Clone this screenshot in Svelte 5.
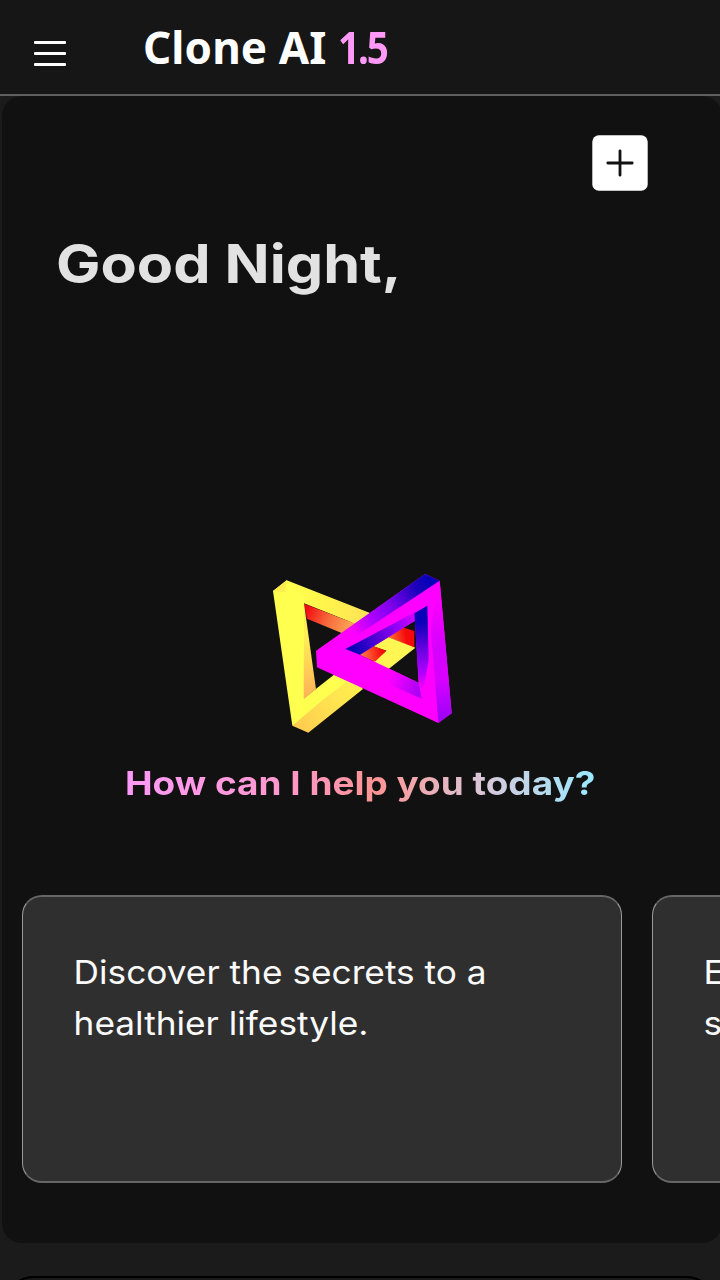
<script>
  const prompts = [
    ['Discover the secrets to a', 'healthier lifestyle.'],
    ['Explore the world of', 'space and science.']
  ];
</script>

<div class="app">
  <header>
    <button class="menu" aria-label="Menu"><i></i><i></i><i></i></button>
    <h1>Clone AI <b>1.5</b></h1>
  </header>

  <main>
    <div class="tools">
      <button class="add" aria-label="New chat">
        <svg viewBox="0 0 56 56" width="56" height="56">
          <rect x=".3" y=".3" width="55.4" height="55.4" rx="6.5" fill="#fff" />
          <path d="M28 15.8V40.2M15.8 28H40.2" stroke="#111" stroke-width="2.8" stroke-linecap="round" />
        </svg>
      </button>
    </div>

    <h2><span class="fit">Good Night,</span></h2>

    <div class="hero">
      <svg class="logo" viewBox="0 0 630 555" width="210" height="185">
        <defs>
          <linearGradient id="bar" gradientUnits="userSpaceOnUse" x1="80" y1="90" x2="330" y2="190">
            <stop offset="0" stop-color="#ffff50" /><stop offset=".5" stop-color="#fff34b" /><stop offset="1" stop-color="#ffe05a" />
          </linearGradient>
          <linearGradient id="ember" gradientUnits="userSpaceOnUse" x1="140" y1="150" x2="275" y2="205">
            <stop offset="0" stop-color="#f50d12" /><stop offset=".45" stop-color="#f6653a" /><stop offset="1" stop-color="#ffa757" />
          </linearGradient>
          <linearGradient id="glow" gradientUnits="userSpaceOnUse" x1="385" y1="225" x2="435" y2="215">
            <stop offset="0" stop-color="#ff7038" /><stop offset="1" stop-color="#f50a0c" />
          </linearGradient>
          <linearGradient id="inner" gradientUnits="userSpaceOnUse" x1="135" y1="230" x2="150" y2="410">
            <stop offset="0" stop-color="#ffee55" /><stop offset="1" stop-color="#ffb258" />
          </linearGradient>
          <linearGradient id="foot" gradientUnits="userSpaceOnUse" x1="120" y1="510" x2="300" y2="375">
            <stop offset="0" stop-color="#ffcc50" /><stop offset=".5" stop-color="#ffe050" /><stop offset="1" stop-color="#fff04d" />
          </linearGradient>
          <linearGradient id="spark" gradientUnits="userSpaceOnUse" x1="310" y1="286" x2="368" y2="275">
            <stop offset="0" stop-color="#ff7040" /><stop offset="1" stop-color="#f50808" />
          </linearGradient>
          <linearGradient id="top" gradientUnits="userSpaceOnUse" x1="505" y1="60" x2="275" y2="215">
            <stop offset="0" stop-color="#0800b8" /><stop offset=".16" stop-color="#1c00bc" /><stop offset=".5" stop-color="#8000ee" /><stop offset=".75" stop-color="#b000ff" /><stop offset="1" stop-color="#f0f" />
          </linearGradient>
          <linearGradient id="mid" gradientUnits="userSpaceOnUse" x1="280" y1="270" x2="470" y2="165">
            <stop offset="0" stop-color="#0900b8" /><stop offset=".4" stop-color="#5b00d8" /><stop offset=".75" stop-color="#a000ff" /><stop offset="1" stop-color="#e000ff" />
          </linearGradient>
          <linearGradient id="side" gradientUnits="userSpaceOnUse" x1="480" y1="185" x2="485" y2="390">
            <stop offset="0" stop-color="#0900b8" /><stop offset=".45" stop-color="#7200e5" /><stop offset=".75" stop-color="#b000ff" /><stop offset="1" stop-color="#f0f" />
          </linearGradient>
          <linearGradient id="edge" gradientUnits="userSpaceOnUse" x1="540" y1="100" x2="555" y2="470">
            <stop offset="0" stop-color="#f0f" /><stop offset=".45" stop-color="#d500ff" /><stop offset=".7" stop-color="#d800ff" /><stop offset="1" stop-color="#a000f8" />
          </linearGradient>
          <linearGradient id="low" gradientUnits="userSpaceOnUse" x1="390" y1="350" x2="480" y2="385">
            <stop offset="0" stop-color="#f0f" /><stop offset="1" stop-color="#aa00f5" />
          </linearGradient>
        </defs>
        <path d="M80 61L330 159L330 212L265 183L132 130L66 92Z" fill="url(#bar)" />
        <path d="M132 131L275 187L330 210L320 250L141 176Z" fill="url(#ember)" />
        <path d="M415 198L463 213V264L370 226Z" fill="url(#glow)" />
        <path d="M370 226L466 263L385 328L335 309L379 272L336 257Z" fill="#fff653" />
        <path d="M336 257L379 272L345 305L298 284Z" fill="url(#spark)" />
        <path d="M39 93L80 61L132 112L132 415L222 344L312 380L97 497Z" fill="#ffff50" />
        <path d="M132 130L168 388L131 417Z" fill="url(#inner)" />
        <path d="M39 93L80 61L75 96Z" fill="#ffed4e" />
        <path d="M97 497L188 420L260 365L310 386L145 518Z" fill="url(#foot)" />
        <path d="M168 273L495 42L539 62L575 460L535 489L171 322ZM300 284L476 368L465 182Z" fill="#f0f" fill-rule="evenodd" />
        <path d="M495 42L539 62L285 230L168 273Z" fill="url(#top)" />
        <path d="M256 267L502 137L463 162L465 182L300 284Z" fill="url(#mid)" />
        <path d="M463 160L502 137L506 300L485 416L476 368Z" fill="url(#side)" />
        <path d="M539 62L575 460L535 489L512 200Z" fill="url(#edge)" />
        <path d="M385 325L476 368L485 416L385 372Z" fill="url(#low)" />
      </svg>
      <p class="ask"><span class="fit">How can I help you today?</span></p>
    </div>

    <div class="cards">
      {#each prompts as lines}
        <article>
          {#each lines as line}<p><span class="fit">{line}</span></p>{/each}
        </article>
      {/each}
    </div>
  </main>

  <footer><div class="composer"></div></footer>
</div>

<style>
  :global(body) { background: #1b1b1b; overflow: hidden; }
  .app { width: 720px; height: 1280px; overflow: hidden; background: #1b1b1b; font-family: Inter, sans-serif; display: flex; flex-direction: column; }
  h1, h2, p { margin: 0; white-space: nowrap; }
  button { border: 0; padding: 0; }
  .fit { display: inline-block; transform-origin: 0 50%; }
  header { height: 94px; flex: none; background: #161616; border-bottom: 2px solid #606060; display: flex; align-items: flex-start; }
  .menu { background: none; width: 32px; margin: 41px 0 0 34px; display: flex; flex-direction: column; gap: 8.4px; }
  .menu i { display: block; height: 2.6px; border-radius: 1px; background: #fff; }
  h1 { margin: 17px 0 0 77px; font: 700 44px/60px "Noto Sans", sans-serif; letter-spacing: .1px; color: #fff; }
  h1 b { display: inline-block; font-weight: 700; letter-spacing: -2.5px; transform: scaleX(.88); transform-origin: 0 50%; color: #ff99f8; }
  main { height: 1147px; width: 720px; flex: none; margin-left: 2px; background: #111; border-radius: 20px; display: flex; flex-direction: column; }
  .tools { display: flex; justify-content: flex-end; padding: 39px 74px 0 0; }
  .add { width: 56px; height: 56px; background: none; }
  .add svg { display: block; }
  h2 { margin: 41px 0 0 54px; font-size: 53px; line-height: 64px; font-weight: 700; color: #e2e2e2; }
  h2 .fit { transform: scaleX(1.118); }
  .hero { display: flex; flex-direction: column; margin-top: 264px; }
  .logo { margin-left: 258px; }
  .ask { margin: 18px 0 0 122.7px; font-size: 33px; line-height: 40px; font-weight: 700; }
  .ask .fit { transform: scaleX(1.12); color: transparent; background: linear-gradient(90deg, #ff99f8, #ff99d0 32%, #ff9494 53%, #d4cbdd 78%, #99e9ff); background-clip: text; -webkit-background-clip: text; }
  .cards { display: flex; gap: 30px; margin: 92px 0 0 20px; }
  article { box-sizing: border-box; flex: none; width: 600px; height: 288px; padding: 50px 51px; border: 1px solid #999; border-top: 2px solid #666; border-bottom: 2px solid #666; border-radius: 20px; background: #2f2f2f; color: #fafafa; font-size: 33px; line-height: 51px; }
  article .fit { transform: scaleX(1.068) translate(-.4px, -.5px); }
  footer { padding: 33px 2px 0; }
  .composer { height: 90px; border: 2px solid #000; border-radius: 32px; background: #191919; }
</style>
